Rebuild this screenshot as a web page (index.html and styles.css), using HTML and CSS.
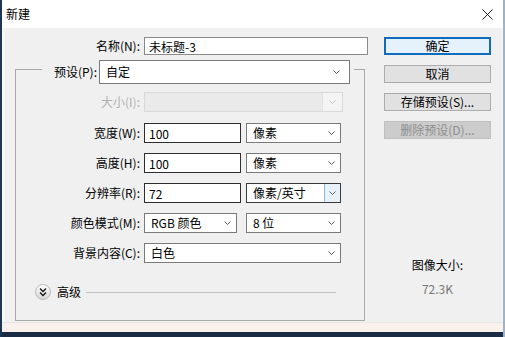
FILE: index.html
```html
<!DOCTYPE html>
<html lang="zh-CN">
<head>
  <meta charset="UTF-8">
  <title>新建</title>
  <link rel="stylesheet" href="styles.css">
</head>
<body>
  <div class="window">
    <div class="titlebar">
      <span class="title">新建</span>
      <svg class="close" width="11" height="11" viewBox="0 0 11 11">
        <path d="M0.5 0.5 L10.5 10.5 M10.5 0.5 L0.5 10.5" stroke="#222" stroke-width="1" fill="none"/>
      </svg>
    </div>

    <div class="client">
      <div class="form">
        <div class="name-row">
          <label class="name-label">名称(N):</label>
          <input type="text" class="field name-field" value="未标题-3">
        </div>

        <fieldset class="group">
          <legend class="preset">
            <label class="preset-label">预设(P):</label>
            <div class="dropdown preset-dropdown">
              <span class="value">自定</span>
              <span class="arrow"><svg width="7" height="4" viewBox="0 0 7 4"><polyline points="0.5,0.5 3.5,3.5 6.5,0.5" fill="none" stroke="#5a5a5a"/></svg></span>
            </div>
          </legend>

          <div class="rows">
            <div class="row size-row">
              <label class="disabled">大小(I):</label>
              <div class="dropdown disabled wide">
                <span class="value"></span>
                <span class="arrow"><svg width="7" height="4" viewBox="0 0 7 4"><polyline points="0.5,0.5 3.5,3.5 6.5,0.5" fill="none" stroke="#c4c4c4"/></svg></span>
              </div>
            </div>
            <div class="row">
              <label>宽度(W):</label>
              <input type="text" class="field num" value="100">
              <div class="dropdown unit">
                <span class="value">像素</span>
                <span class="arrow"><svg width="7" height="4" viewBox="0 0 7 4"><polyline points="0.5,0.5 3.5,3.5 6.5,0.5" fill="none" stroke="#5a5a5a"/></svg></span>
              </div>
            </div>
            <div class="row">
              <label>高度(H):</label>
              <input type="text" class="field num" value="100">
              <div class="dropdown unit">
                <span class="value">像素</span>
                <span class="arrow"><svg width="7" height="4" viewBox="0 0 7 4"><polyline points="0.5,0.5 3.5,3.5 6.5,0.5" fill="none" stroke="#5a5a5a"/></svg></span>
              </div>
            </div>
            <div class="row">
              <label>分辨率(R):</label>
              <input type="text" class="field num" value="72">
              <div class="dropdown unit focus">
                <span class="value">像素/英寸</span>
                <span class="arrow"><svg width="7" height="4" viewBox="0 0 7 4"><polyline points="0.5,0.5 3.5,3.5 6.5,0.5" fill="none" stroke="#5a5a5a"/></svg></span>
              </div>
            </div>
            <div class="row">
              <label>颜色模式(M):</label>
              <div class="dropdown mode">
                <span class="value">RGB 颜色</span>
                <span class="arrow"><svg width="7" height="4" viewBox="0 0 7 4"><polyline points="0.5,0.5 3.5,3.5 6.5,0.5" fill="none" stroke="#5a5a5a"/></svg></span>
              </div>
              <div class="dropdown unit">
                <span class="value">8 位</span>
                <span class="arrow"><svg width="7" height="4" viewBox="0 0 7 4"><polyline points="0.5,0.5 3.5,3.5 6.5,0.5" fill="none" stroke="#5a5a5a"/></svg></span>
              </div>
            </div>
            <div class="row">
              <label>背景内容(C):</label>
              <div class="dropdown wide">
                <span class="value">白色</span>
                <span class="arrow"><svg width="7" height="4" viewBox="0 0 7 4"><polyline points="0.5,0.5 3.5,3.5 6.5,0.5" fill="none" stroke="#5a5a5a"/></svg></span>
              </div>
            </div>
          </div>

          <div class="advanced">
            <svg width="16" height="16" viewBox="0 0 16 16">
              <defs>
                <linearGradient id="knob" x1="0" y1="0" x2="0" y2="1">
                  <stop offset="0" stop-color="#ffffff"/>
                  <stop offset="1" stop-color="#d6d6d6"/>
                </linearGradient>
              </defs>
              <circle cx="8" cy="8" r="7.5" fill="url(#knob)" stroke="#b9b9b9"/>
              <polyline points="5,4.5 8,7.5 11,4.5" fill="none" stroke="#1a1a1a" stroke-width="1.4"/>
              <polyline points="5,8.5 8,11.5 11,8.5" fill="none" stroke="#1a1a1a" stroke-width="1.4"/>
            </svg>
            <span class="advanced-text">高级</span>
            <span class="rule"></span>
          </div>
        </fieldset>
      </div>

      <div class="side">
        <button class="btn primary">确定</button>
        <button class="btn">取消</button>
        <button class="btn">存储预设(S)...</button>
        <button class="btn" disabled>删除预设(D)...</button>
        <div class="size-title">图像大小:</div>
        <div class="size-value">72.3K</div>
      </div>
    </div>

    <div class="frame-bottom"></div>
    <div class="taskbar"></div>
  </div>
</body>
</html>
```

FILE: styles.css
```css
body {
  margin: 0;
  font-family: "Noto Sans CJK SC", "Noto Sans", sans-serif;
  font-size: 12px;
  color: #000;
}

.window {
  width: 505px;
  height: 337px;
  box-sizing: border-box;
  display: flex;
  flex-direction: column;
  border-left: 2px solid #1d3654;
  border-right: 2px solid #9fb3c8;
  background: #f9f7f6;
  overflow: hidden;
}

.titlebar {
  height: 28px;
  flex: none;
  background: #fff;
  display: flex;
  align-items: center;
  justify-content: space-between;
  padding: 0 10px 0 4px;
}

.title {
  line-height: 16px;
}

.client {
  height: 294px;
  flex: none;
  display: flex;
  background: #f0f0f0;
  margin: 0 1px 0 3px;
}

.form {
  padding: 9px 0 0 10px;
}

.name-row {
  display: flex;
  align-items: center;
  height: 18px;
}

.name-label {
  width: 125px;
  margin-right: 4px;
  text-align: right;
  line-height: 16px;
}

.field {
  box-sizing: border-box;
  height: 20px;
  margin: 0;
  padding: 0 4px;
  border: 1px solid #2e2e2e;
  background: #fff;
  font-family: inherit;
  font-size: 12px;
  color: #000;
  outline: none;
}

.name-field {
  width: 224px;
  height: 18px;
  border-color: #8a8a8a;
}

.num {
  width: 97px;
  margin-right: 5px;
}

.group {
  width: 350px;
  box-sizing: border-box;
  margin: 0;
  padding: 8px 0 20px 0;
  border: 1px solid #a9a9a9;
  min-width: 0;
}

.preset {
  display: flex;
  align-items: center;
  margin-left: 26px;
  padding: 5px 4px 0 3px;
}

.preset-label {
  width: 52px;
  margin-right: 2px;
  text-align: right;
  line-height: 16px;
}

.dropdown {
  box-sizing: border-box;
  height: 20px;
  display: flex;
  align-items: stretch;
  border: 1px solid #7a7a7a;
  background: #fff;
}

.dropdown .value {
  flex: 1;
  padding-left: 6px;
  line-height: 18px;
  white-space: nowrap;
}

.dropdown .arrow {
  width: 15px;
  margin-right: 1px;
  display: flex;
  align-items: center;
  justify-content: center;
}

.preset-dropdown {
  width: 251px;
  height: 24px;
  padding-right: 4px;
}

.preset-dropdown .value {
  line-height: 22px;
}

.rows {
  display: flex;
  flex-direction: column;
  gap: 10px;
}

.row {
  display: flex;
  align-items: center;
  height: 20px;
}

.size-row {
  margin-bottom: 1px;
}

.row label {
  width: 124px;
  margin-right: 4px;
  text-align: right;
  line-height: 16px;
}

.row label.disabled {
  color: #b0b0b0;
}

.wide {
  width: 197px;
}

.unit {
  width: 95px;
}

.mode {
  width: 93px;
  margin-right: 9px;
}

.dropdown.disabled {
  width: 199px;
  border-color: #d9d9d9;
  background: #eaeaea;
}

.dropdown.disabled .arrow {
  width: 19px;
  margin-right: 0;
  background: #f4f4f4;
  border-left: 1px solid #e2e2e2;
}

.dropdown.focus {
  border-color: #3a3a3a;
}

.dropdown.focus .arrow {
  width: 15px;
  margin-right: 0;
  border-left: 1px solid #86b8e8;
  background: #e8f2fb;
}

.advanced {
  display: flex;
  align-items: center;
  height: 16px;
  margin-top: 21px;
  padding-left: 19px;
  padding-right: 28px;
}

.advanced-text {
  margin-left: 6px;
  line-height: 16px;
}

.rule {
  flex: 1;
  height: 1px;
  margin-left: 5px;
  background: #c2c2c2;
}

.side {
  width: 107px;
  margin-left: 16px;
  padding-top: 9px;
  display: flex;
  flex-direction: column;
  gap: 10px;
}

.btn {
  box-sizing: border-box;
  height: 18px;
  margin: 0;
  padding: 0;
  border: 1px solid #adadad;
  background: #e1e1e1;
  font-family: inherit;
  font-size: 12px;
  line-height: 14px;
  color: #000;
}

.btn.primary {
  border: 2px solid #0f6cbd;
  background: #e5f1fb;
}

.btn:disabled {
  border-color: #bfbfbf;
  background: #cccccc;
  color: #8c8c8c;
}

.size-title {
  margin-top: 108px;
  text-align: center;
  line-height: 16px;
}

.size-value {
  margin-top: -2px;
  text-align: center;
  line-height: 16px;
  color: #777;
}

.frame-bottom {
  flex: 1;
  background: #fbf1ec;
  border-top: 1px solid #e4e8ee;
}

.taskbar {
  height: 5px;
  flex: none;
  background: #1a2d45;
}
```
